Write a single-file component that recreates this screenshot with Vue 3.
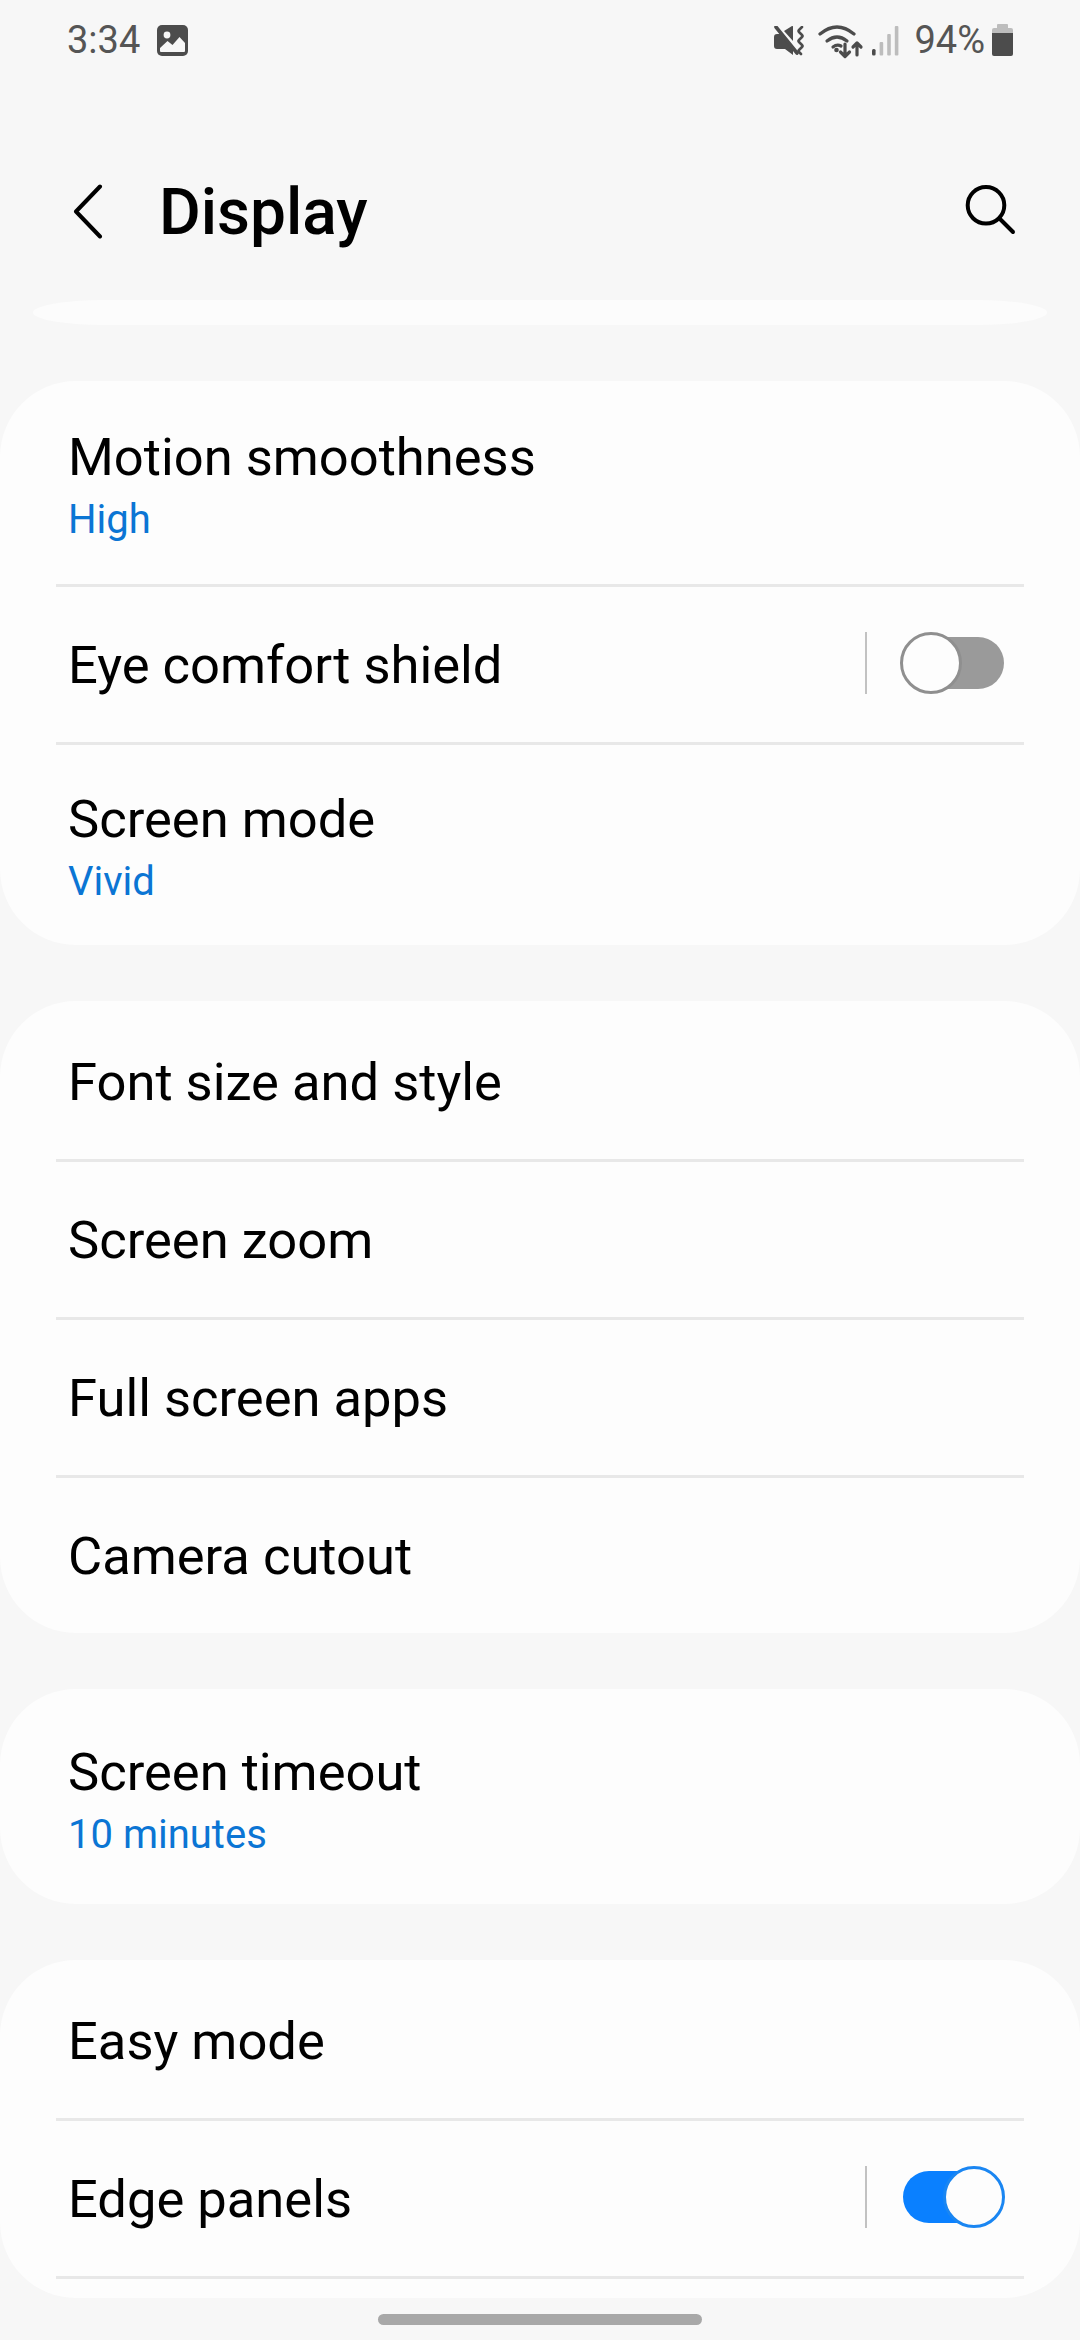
<script setup>
// h = row height, pad = extra space above the text
const groups = [
  [
    { title: 'Motion smoothness', sub: 'High', h: 203, pad: 6 },
    { title: 'Eye comfort shield', toggle: 'off', h: 155 },
    { title: 'Screen mode', sub: 'Vivid', h: 200, pad: 5 },
  ],
  [
    { title: 'Font size and style', h: 158, pad: 3 },
    { title: 'Screen zoom', h: 155 },
    { title: 'Full screen apps', h: 155 },
    { title: 'Camera cutout', h: 155 },
  ],
  [{ title: 'Screen timeout', sub: '10 minutes', h: 215, pad: 8 }],
  [
    { title: 'Easy mode', h: 158, pad: 3 },
    { title: 'Edge panels', toggle: 'on', h: 155 },
    { h: 19 },
  ],
]
</script>

<template>
  <div class="screen">
    <div class="status">
      <span class="clock">3:34</span>
      <svg class="ic-photo" width="31" height="31" viewBox="0 0 31 31">
        <rect width="31" height="31" rx="5" fill="#4c4c4c" />
        <circle cx="10" cy="10" r="3.4" fill="#f7f7f7" />
        <path d="M3 26v-3l7.500-7 5 4 7-8 5.500 6v8q0 1-1 1H4q-1 0-1-1z" fill="#f7f7f7" />
      </svg>
      <span class="grow"></span>
      <svg class="ic-mute" width="30" height="30" viewBox="0 0 30 30">
        <path d="M0 11q0-3 3-3h3l13 15v6l-8-6H3q-3 0-3-3zM10 5l8-5q1-.5 1 1v14z" fill="#4c4c4c" />
        <path d="M2 1l21 26" stroke="#4c4c4c" stroke-width="3.600" stroke-linecap="round" />
        <path d="M28 1l-3 3q-1 1 0 2l3 3q1 1 0 2l-3 3q-1 1 0 2l3 3q1 1 0 2l-3 3q-1 1 0 2l2 2" fill="none" stroke="#4c4c4c" stroke-width="2.600" stroke-linecap="round" />
      </svg>
      <svg class="ic-wifi" width="46" height="34" viewBox="0 0 46 34">
        <g fill="none" stroke="#4c4c4c" stroke-width="3.200" stroke-linecap="round" stroke-linejoin="round">
          <path d="M2 9q17-14 34 0" />
          <path d="M9 16q10-8 20 0" />
          <path d="M15 22q4-3 8-1" />
          <path d="M27 19v12M22.500 27l4.500 4.500 4.500-4.500" />
          <path d="M39 30V18M35 22l4-4 4 4" />
        </g>
        <circle cx="18.500" cy="25" r="2.300" fill="#4c4c4c" />
      </svg>
      <svg class="ic-signal" width="27" height="30" viewBox="0 0 27 30">
        <rect x="0" y="23" width="3.600" height="6.500" rx="1.500" fill="#4c4c4c" />
        <rect x="7.600" y="16" width="3.600" height="13.500" rx="1" fill="#bdbdbd" />
        <rect x="15.200" y="8" width="3.600" height="21.500" rx="1" fill="#bdbdbd" />
        <rect x="22.800" y="0" width="3.600" height="29.500" rx="1" fill="#bdbdbd" />
      </svg>
      <span class="batt-text">94%</span>
      <svg class="ic-batt" width="21" height="32" viewBox="0 0 21 32">
        <path d="M6 0h9q1 0 1 1v3h3q2 0 2 2v3H0V6q0-2 2-2h3V1q0-1 1-1z" fill="#bdbdbd" />
        <path d="M0 9h21v21q0 2-2 2H2q-2 0-2-2z" fill="#4c4c4c" />
      </svg>
    </div>

    <header class="appbar">
      <svg class="ic-back" width="30" height="55" viewBox="0 0 30 55">
        <path d="M27 2.500L3 27.500l24 25" fill="none" stroke="#000" stroke-width="4" stroke-linecap="round" stroke-linejoin="round" />
      </svg>
      <h1>Display</h1>
      <svg class="ic-search" width="52" height="52" viewBox="0 0 52 52">
        <circle cx="21" cy="20.300" r="18.300" fill="none" stroke="#000" stroke-width="4" />
        <path d="M35 34l13 13" stroke="#000" stroke-width="4" stroke-linecap="round" />
      </svg>
    </header>

    <div class="sliver"></div>

    <section v-for="(group, i) in groups" :key="i" class="card">
      <template v-for="(row, j) in group" :key="j">
        <div class="sep" v-if="j > 0"></div>
        <div class="row" :style="{ height: row.h + 'px', paddingTop: (row.pad || 0) + 'px' }">
          <div class="labels" v-if="row.title">
            <div class="title">{{ row.title }}</div>
            <div class="sub" v-if="row.sub">{{ row.sub }}</div>
          </div>
          <template v-if="row.toggle">
            <span class="vline"></span>
            <span class="switch" :class="row.toggle">
              <span class="thumb"></span>
            </span>
          </template>
        </div>
      </template>
    </section>

    <div class="pill"></div>
  </div>
</template>

<style>
html,
body {
  margin: 0;
  background: #f7f7f7;
}
</style>

<style scoped>
.screen {
  width: 1080px;
  height: 2340px;
  overflow: hidden;
  background: #f7f7f7;
  font-family: Roboto, "Liberation Sans", sans-serif;
  color: #000;
}

.status {
  height: 80px;
  display: flex;
  align-items: flex-start;
  color: #555;
  font-size: 38px;
}

.clock {
  margin: 18px 0 0 67px;
  line-height: 44px;
}

.ic-photo {
  margin: 25px 0 0 17px;
}

.grow {
  flex: 1;
}

.ic-mute {
  margin-top: 26px;
}

.ic-wifi {
  margin: 25px 0 0 14px;
}

.ic-signal {
  margin: 26px 0 0 8px;
}

.batt-text {
  margin: 18px 0 0 15px;
  line-height: 44px;
}

.ic-batt {
  margin: 24px 67px 0 7px;
}

.appbar {
  height: 220px;
  display: flex;
  align-items: flex-start;
}

.ic-back {
  margin: 104px 0 0 73px;
}

h1 {
  margin: 98px 0 0 56px;
  font-size: 64px;
  font-weight: 500;
  line-height: 70px;
  flex: 1;
}

.ic-search {
  margin: 105px 63px 0 0;
}

.sliver {
  height: 25px;
  margin: 0 33px;
  background: #fcfcfc;
  border-radius: 70px / 12.500px;
}

.card {
  margin-top: 56px;
  background: #fdfdfd;
  border-radius: 76px;
  overflow: hidden;
}

.row {
  display: flex;
  align-items: center;
  padding: 0 76px 0 68px;
  box-sizing: border-box;
}

.labels {
  flex: 1;
}

.title {
  font-size: 52.500px;
  line-height: 60px;
}

.sub {
  margin-top: 8px;
  font-size: 40px;
  line-height: 50px;
  color: #0b75d4;
}

.sep {
  height: 3px;
  margin: 0 56px;
  background: #e8e8e8;
}

.vline {
  width: 2px;
  height: 62px;
  margin: -3px 36px 0 0;
  background: #c2c2c2;
}

.switch {
  width: 101px;
  height: 52px;
  margin-top: -3px;
  border-radius: 26px;
  position: relative;
}

.switch.off {
  background: #9a9a9a;
}

.switch.on {
  background: #0a80ff;
}

.thumb {
  position: absolute;
  top: -5px;
  width: 62px;
  height: 62px;
  box-sizing: border-box;
  border-radius: 50%;
  background: #fdfdfd;
  border: 3px solid;
}

.off .thumb {
  left: -3px;
  border-color: #8f8f8f;
}

.on .thumb {
  right: -1px;
  border-color: #1a86f2;
}

.pill {
  width: 324px;
  height: 11px;
  margin: 16px auto 0;
  border-radius: 6px;
  background: #a8a8a8;
}
</style>
